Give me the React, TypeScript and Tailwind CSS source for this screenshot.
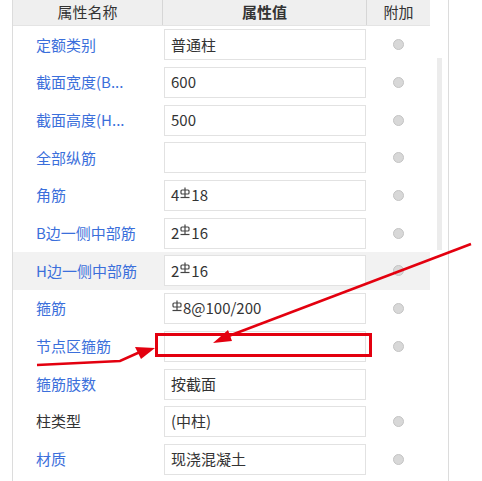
import React from "react";

type Row = {
  name: string;
  value: string;
  radio?: boolean;
  plain?: boolean;
  active?: boolean;
};

const rows: Row[] = [
  { name: "定额类别", value: "普通柱", radio: true },
  { name: "截面宽度(B...", value: "600", radio: true },
  { name: "截面高度(H...", value: "500", radio: true },
  { name: "全部纵筋", value: "", radio: true },
  { name: "角筋", value: "4#18", radio: true },
  { name: "B边一侧中部筋", value: "2#16", radio: true },
  { name: "H边一侧中部筋", value: "2#16", radio: true, active: true },
  { name: "箍筋", value: "#8@100/200", radio: true },
  { name: "节点区箍筋", value: "", radio: true },
  { name: "箍筋肢数", value: "按截面" },
  { name: "柱类型", value: "(中柱)", radio: true, plain: true },
  { name: "材质", value: "现浇混凝土", radio: true },
  { name: "", value: "" },
];

function Rebar() {
  return (
    <svg
      width="10"
      height="12"
      viewBox="0 0 10 12"
      className="inline-block -mt-[6px] mx-[1px]"
    >
      <path d="M5 0.5V10" stroke="#444" strokeWidth="1.2" fill="none" />
      <rect x="1" y="3" width="8" height="4" rx="1" stroke="#444" strokeWidth="1.2" fill="none" />
      <path d="M0.5 10.5H9.5" stroke="#444" strokeWidth="1.2" fill="none" />
    </svg>
  );
}

function ValueText({ text }: { text: string }) {
  const parts = text.split("#");
  return (
    <>
      {parts.map((p, i) => (
        <React.Fragment key={i}>
          {i > 0 && <Rebar />}
          {p}
        </React.Fragment>
      ))}
    </>
  );
}

export default function App() {
  return (
    <div
      className="relative w-[482px] h-[481px] overflow-hidden bg-white"
      style={{ fontFamily: '"Noto Sans CJK SC", "Noto Sans", sans-serif' }}
    >
      <div className="ml-[12px] w-[437px] h-full border-l border-r border-[#dcdcdc] flex">
        <div className="w-[417px] flex flex-col">
          <div className="h-[26px] flex bg-[#efefef] border-b border-[#e4e4e4] text-[15px] text-[#333] shrink-0">
            <div className="w-[150px] flex items-center justify-center border-r border-[#d6d6d6]">
              属性名称
            </div>
            <div className="w-[204px] flex items-center justify-center border-r border-[#d6d6d6] font-semibold">
              属性值
            </div>
            <div className="flex-1 flex items-center justify-center">附加</div>
          </div>
          {rows.map((r, i) => (
            <div
              key={i}
              className={`h-[37.7px] shrink-0 flex items-center ${r.active ? "bg-[#f2f2f2]" : ""}`}
            >
              <div
                className={`w-[150px] pl-[23px] text-[15px] whitespace-nowrap ${r.plain ? "text-[#333]" : "text-[#3b6fdb]"}`}
              >
                {r.name}
              </div>
              <div className="w-[204px] px-[1px]">
                <div className="h-[31px] bg-white border border-[#e2e2e2] flex items-center pl-[6px] text-[15px] text-[#333] whitespace-nowrap">
                  <ValueText text={r.value} />
                </div>
              </div>
              <div className="flex-1 flex justify-center pr-[1px]">
                {r.radio && (
                  <span className="w-[11px] h-[11px] rounded-full bg-[#d8d8d8] border border-[#c4c4c4]" />
                )}
              </div>
            </div>
          ))}
        </div>
        <div className="flex-1 pl-[7px] pt-[58px]">
          <div className="w-[5px] h-[192px] bg-[#ececec]" />
        </div>
      </div>

      <div className="absolute left-[155px] top-[333px] w-[217px] h-[24px] border-[3px] border-[#e3000f]" />

      <svg className="absolute inset-0" width="482" height="481" viewBox="0 0 482 481">
        <path d="M471 244 L226 337" stroke="#e3000f" strokeWidth="2.5" fill="none" />
        <path d="M213 343 L228 330 L232 341 Z" fill="#e3000f" />
        <path d="M37 365 L120 361 L140 352" stroke="#e3000f" strokeWidth="2.5" fill="none" />
        <path d="M155 348 L135 347 L141 359 Z" fill="#e3000f" />
      </svg>
    </div>
  );
}
